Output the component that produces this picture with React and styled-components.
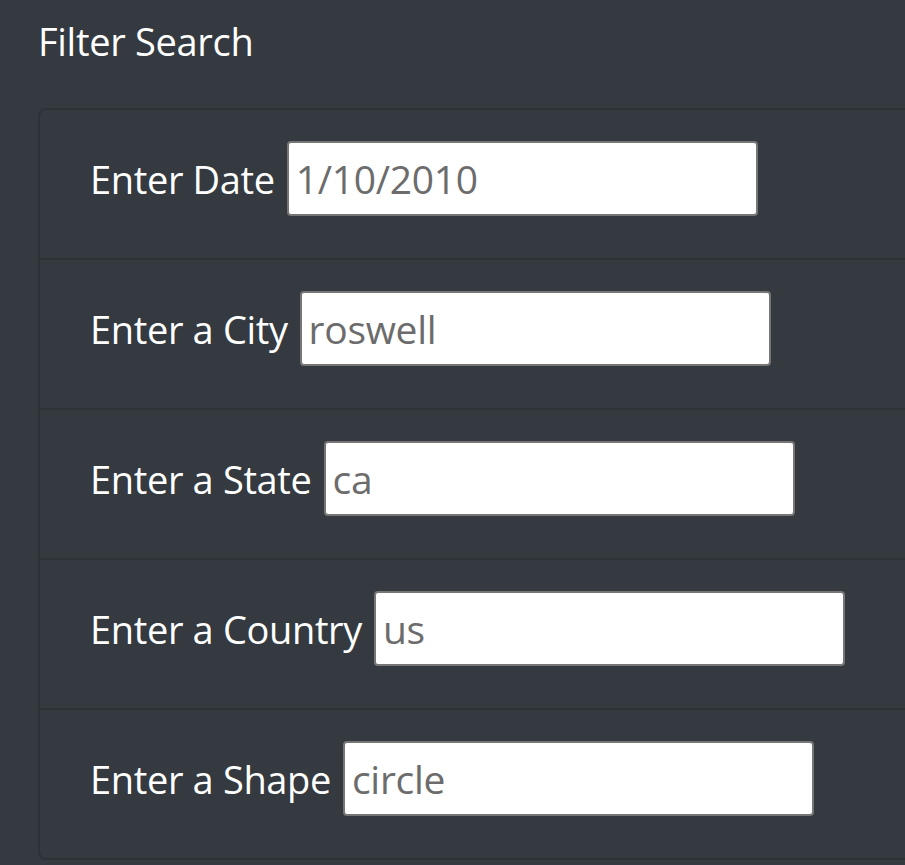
import React from "react";
import styled, { createGlobalStyle } from "styled-components";

const Global = createGlobalStyle`
  html, body {
    margin: 0;
    padding: 0;
    background: #343a40;
    overflow: hidden;
  }
  body {
    font-family: "Open Sans", "Noto Sans", sans-serif;
    color: #fff;
  }
`;

const Page = styled.div`
  width: 100%;
  height: 865px;
  overflow: hidden;
  padding: 14px 0 0 38px;
  box-sizing: border-box;
`;

const Title = styled.h3`
  margin: 0;
  font-size: 38px;
  font-weight: 400;
  line-height: 54px;
  letter-spacing: -0.3px;
`;

const Card = styled.ul`
  list-style: none;
  margin: 40px 0 0 0;
  padding: 0;
  width: 1000px;
  border: 2px solid #2d3237;
  border-radius: 8px;
`;

const Row = styled.li`
  display: flex;
  align-items: center;
  gap: 12px;
  padding: 31px 50px 42px;
  border-top: ${(p) => (p.$first ? "none" : "2px solid #2d3237")};
`;

const Label = styled.label`
  font-size: 38px;
  line-height: 52px;
  letter-spacing: -0.35px;
  white-space: nowrap;
`;

const Input = styled.input`
  box-sizing: border-box;
  width: 471px;
  height: 75px;
  padding: 0 7px;
  border: 2px solid #767676;
  border-radius: 4px;
  background: #fff;
  color: #6c6c6c;
  font-family: "Open Sans", "Noto Sans", sans-serif;
  font-size: 39px;
  letter-spacing: -0.3px;
  outline: none;
`;

const fields = [
  { label: "Enter Date", value: "1/10/2010" },
  { label: "Enter a City", value: "roswell" },
  { label: "Enter a State", value: "ca" },
  { label: "Enter a Country", value: "us" },
  { label: "Enter a Shape", value: "circle" },
];

export default function App() {
  return (
    <Page>
      <Global />
      <Title>Filter Search</Title>
      <Card>
        {fields.map((f, i) => (
          <Row key={f.label} $first={i === 0}>
            <Label>{f.label}</Label>
            <Input type="text" defaultValue={f.value} />
          </Row>
        ))}
      </Card>
    </Page>
  );
}
